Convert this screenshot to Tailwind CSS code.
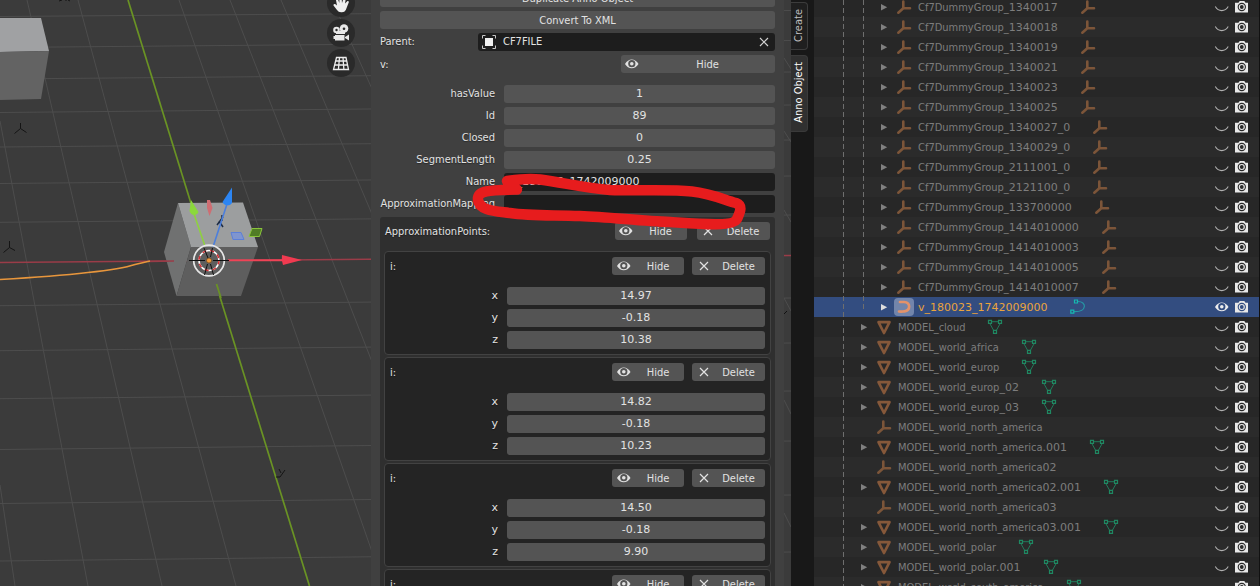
<!DOCTYPE html>
<html lang="en">
<head>
<meta charset="utf-8">
<meta name="viewport" content="width=device-width, initial-scale=1">
<title>Anno Object</title>
<script src="https://cdn.jsdelivr.net/npm/@tailwindcss/browser@4"></script>
</head>
<body class="flex h-screen overflow-hidden bg-[#181818] font-['DejaVu_Sans_Condensed','DejaVu_Sans',sans-serif] text-[11px] leading-[18px] text-[#e2e2e2]">

<svg class="hidden" aria-hidden="true">
  <symbol id="eye" viewBox="0 0 16 16"><path d="M1 8C4.200 2 11.200 2 14.500 8C11.200 13.600 4.200 13.600 1 8Z" fill="currentColor"/><circle cx="7.800" cy="7.700" r="3.600" fill="var(--hole)"/><circle cx="7.800" cy="7.700" r="1.800" fill="currentColor"/></symbol>
  <symbol id="cross" viewBox="0 0 16 16"><path d="M4 4l8 8M12 4l-8 8" stroke="currentColor" stroke-width="1.200" fill="none"/></symbol>
  <symbol id="closed" viewBox="0 0 16 16"><path d="M1.300 7.500C4.500 13 11 13 14.200 7.500" stroke="#b0b0b0" stroke-width="1.100" fill="none"/></symbol>
  <symbol id="camera" viewBox="0 0 16 16"><path d="M1 3.800h3.500l1.200-1.800h4.600l1.200 1.800h2.500v9.700h-13z" fill="#e8e8e8"/><circle cx="7.800" cy="8" r="3.600" fill="none" stroke="var(--hole)" stroke-width="1.100"/><circle cx="7.800" cy="8" r="1.900" fill="var(--hole)"/></symbol>
  <symbol id="arrow" viewBox="0 0 16 16"><path d="M5 5l6.200 3.300l-6.200 3.300z" fill="currentColor"/></symbol>
  <symbol id="empty" viewBox="0 0 16 16"><path d="M7.300 2.500V9.300M7.300 9.300H14M7.300 9.300L2.300 13.700" stroke="#7c5539" stroke-width="2.600" stroke-linecap="round" fill="none"/></symbol>
  <symbol id="mesh" viewBox="0 0 16 16"><path d="M2.500 3.200H13.500L8 14Z" stroke="#85583a" stroke-width="2.700" stroke-linejoin="round" fill="none"/></symbol>
  <symbol id="curve" viewBox="0 0 16 16"><path d="M4 3H8C15 3.400 14.500 11.500 8.500 12.300Q6 12.800 3 12.500" stroke="#e3926a" stroke-width="2.700" stroke-linecap="round" fill="none"/></symbol>
  <symbol id="meshdata" viewBox="0 0 16 16"><path d="M4 2.700H12M2.800 4.500L6.700 11.500M13.200 4.500L9.300 11.500" stroke="#22795a" stroke-width="1" fill="none"/><path d="M1.500 1.300h3v3h-3zM11.500 1.300h3v3h-3zM6.500 11.300h3v3h-3z" stroke="#1f8862" stroke-width="1.200" fill="none"/></symbol>
  <symbol id="curvedata" viewBox="0 0 16 16"><path d="M7.500 2.500C17 2 17.500 13 4 12.700" stroke="#2697a4" stroke-width="1.200" fill="none"/><path d="M4.500 1h3v3h-3zM.800 11.200h3v3h-3z" stroke="#16b8b0" stroke-width="1.200" fill="none"/></symbol>
</svg>

<!-- 3D viewport with its side panel -->
<main class="relative flex min-w-0 flex-1 items-start justify-end overflow-hidden bg-[#3b3b3b]">
  <svg class="absolute inset-0 h-full w-full" aria-label="3D scene">
    <g stroke="#4d4d4d" stroke-width="1" fill="none">
      <path d="M0 16.500L791 10.500M0 47.500L791 40.500M0 79L791 72M0 112.500L791 105M0 147L791 140M0 183.500L791 176M0 222.300L791 215M0 305.700L791 298M0 350.700L791 343M0 398.700L791 391M0 449.500L791 441M0 503.500L791 495M0 561L791 552"/>
      <path d="M0 485L15 586M0 121L88 586M27 0L162 586M78 0L236 586M179 0L384 586M230 0L460 586M281 0L530 586M332 0L596 586M784 58l7 11M784 131l7 11M784 210l7 12M784 298l7 13M784 400l7 14M784 513l7 14"/>
    </g>
    <path d="M0 262.500L791 255.500" stroke="#9a3c48" stroke-width="1.300"/>
    <path d="M128 0L309.500 586" stroke="#6a9324" stroke-width="1.700"/>
    <path d="M0 18H41L49 51L0 52Z" fill="#a0a1a3"/><path d="M0 52L49 51L41 99L0 100Z" fill="#636363"/>
    <path d="M178 203L191 247L176.500 296L164 252Z" fill="#707171"/>
    <path d="M178 203L243 202.500L258 247H191Z" fill="#9c9e9f"/>
    <path d="M191 247H258L241 296H176.500Z" fill="#5e5e5e"/>
    <path d="M216.500 284L221 298" stroke="#6a9324" stroke-width="1.700"/>
    <path d="M149 261.500L174 261" stroke="#9a3c48" stroke-width="1.300"/>
    <path d="M0 279.500C60 276 115 271 135 264.500L150 261" stroke="#e8963c" stroke-width="1.600" fill="none"/>
    <g stroke="#141414" stroke-width="1" fill="none">
      <path d="M20.500 123v5.500l-6 5M20.500 128.500l6 4M9.500 241v6.500l-6 5M9.500 247.500l5.500 3M59 1l3-1M66 1v-1M68 0l2 1M276 477h4l5-7M279 469l2 4"/>
    </g>
    <path d="M217 225l6-8M219 221l4 6M222 215v6" stroke="#1c2b45" stroke-width="1.500"/>
    <path d="M207 200l3-0l2.500 8l-3 8l-2.500-8z" fill="#cf6d72"/>
    <path d="M205 246L194 214" stroke="#8ed13f" stroke-width="1.600"/><path d="M191 200L198.500 212C197 216 191 216 189.500 211Z" fill="#8bd83c"/>
    <path d="M213 247L227 204" stroke="#4c7fdc" stroke-width="1.600"/><path d="M232 187.500V203C230 206.500 224 206 222.500 202Z" fill="#2c85f2"/>
    <path d="M231 232.500h10l3 7h-11z" fill="#7f95cf" stroke="#5c7fd8"/>
    <path d="M252 228.500h10l-2.500 8h-10.500z" fill="#507c25" stroke="#8ac43c"/>
    <path d="M228 260.300H283" stroke="#ef4356" stroke-width="2"/><path d="M282 255L302 260L283 265Q281 260 282 255Z" fill="#f03a50"/>
    <circle cx="209" cy="260.500" r="15.300" fill="none" stroke="#e6e6e6" stroke-width="1.700"/>
    <circle cx="209" cy="260.500" r="10" fill="none" stroke="#fff" stroke-width="1.500"/>
    <circle cx="209" cy="260.500" r="10" fill="none" stroke="#d32d32" stroke-width="1.500" stroke-dasharray="4 4"/>
    <path d="M189 260.500h16M213 260.500h16M208 258l-4-10M210.500 257l2-9M207.500 264l-3 11M210.500 264l3 11" stroke="#111" stroke-width="1"/>
    <circle cx="209" cy="260.500" r="2.500" fill="#f39a3d" stroke="#704818" stroke-width=".700"/>
    <path d="M784 314l3-3" stroke="#111"/>
  </svg>

  <nav class="relative -mt-[11px] mr-4 flex flex-col gap-[2px]" aria-label="View controls">
    <button aria-label="Move view" class="size-7 rounded-full bg-[#2a2a2a]"><svg class="size-7" viewBox="0 0 28 28"><path d="M10 21L6.500 16.500Q6.300 14.500 8.500 15.300L10 16.500L8.700 9.500Q9.200 8 10.600 9.200L12.300 14L12.500 7Q13.500 5.800 14.500 7L15 14L17 8Q18.500 7 19 8.500L18 14.500L20.500 12Q22 11.800 21.800 13.200L18.800 21Q17.500 23.500 14.300 23.200Q11.500 23.300 10 21Z" fill="#f0f0f0"/></svg></button>
    <button aria-label="Camera view" class="size-7 rounded-full bg-[#2a2a2a]"><svg class="size-7" viewBox="0 0 28 28"><circle cx="9.500" cy="11" r="3.300" fill="#e8e8e8"/><circle cx="17" cy="9.500" r="4.300" fill="#e8e8e8"/><path d="M9 12h9v3h-9zM8 16h9.500v5.500h-9.500v-1.500h-1.500v-3h1.500zM18 18l4-2.500v6l-4-2.500z" fill="#e8e8e8"/><circle cx="9.500" cy="11" r="1.200" fill="#2a2a2a"/><circle cx="17" cy="9.800" r="1.300" fill="#2a2a2a"/></svg></button>
    <button aria-label="Perspective" class="size-7 rounded-full bg-[#2a2a2a]"><svg class="size-7" viewBox="0 0 28 28" fill="none" stroke="#ededed" stroke-width="1.300"><path d="M9.500 8.500H19L21.500 20.500H6.500ZM8.700 12H19.700M7.700 16H20.700M12.500 8.500L11.400 20.500M16 8.500L16.900 20.500"/></svg></button>
  </nav>

  <section class="relative mr-[7px] h-screen w-[413px] shrink-0 overflow-hidden bg-[#404040] px-[9px]" aria-label="Anno Object panel">
    <div class="-mt-[11px] flex flex-col gap-1 [text-shadow:0_1px_1px_rgba(0,0,0,0.4)]">
      <button class="h-[18px] rounded-[3px] bg-[#545454] leading-[20px]">Duplicate Anno Object</button>
      <button class="h-[18px] rounded-[3px] bg-[#545454] pt-[2px] leading-[16px]">Convert To XML</button>
      <div class="flex h-[18px] items-center justify-between">
        <label for="parent">Parent:</label>
        <div class="flex h-[18px] w-[297px] items-center rounded-[3px] bg-[#1d1d1d] px-[3px]">
          <svg class="size-4" viewBox="0 0 16 16"><path d="M1.500 4.500v-3h3M11.500 1.500h3v3M14.500 11.500v3h-3M4.500 14.500h-3v-3" stroke="#c8c8c8" fill="none"/><path d="M4 4h8v8h-8z" fill="#f0f0f0"/></svg>
          <input id="parent" value="CF7FILE" class="ml-[6px] h-[18px] min-w-0 flex-1 bg-transparent">
          <button aria-label="Clear parent"><svg class="size-4 text-[#d0d0d0]"><use href="#cross"/></svg></button>
        </div>
      </div>
      <div class="mb-2 flex h-[18px] items-center justify-between">
        <span class="pt-[2px]">v:</span>
        <button class="flex h-[18px] w-[154px] items-center rounded-[3px] bg-[#545454] pl-[3px] [--hole:#545454]"><svg class="size-4"><use href="#eye"/></svg><span class="flex-1 pt-[2px]">Hide</span></button>
      </div>
      <div id="fields" class="flex flex-col gap-1"></div>
      <section class="rounded-[3px] bg-[#2f2f2f] px-1 pt-[5px]">
        <header class="mb-[11px] flex h-[18px] items-center gap-[10px] px-px">
          <h2 class="flex-1 pt-[2px]">ApproximationPoints:</h2>
          <button class="flex h-[18px] w-[72px] items-center rounded-[3px] bg-[#545454] pl-[3px] [--hole:#545454]"><svg class="size-4"><use href="#eye"/></svg><span class="flex-1 pt-[2px]">Hide</span></button>
          <button class="flex h-[18px] w-[73px] items-center rounded-[3px] bg-[#545454] pl-[3px]"><svg class="size-4"><use href="#cross"/></svg><span class="flex-1 pt-[2px]">Delete</span></button>
        </header>
        <div id="points" class="flex flex-col gap-[2px]"></div>
      </section>
    </div>
  </section>

  <!-- Freehand marker stroke around the ApproximationMapping field -->
  <svg class="pointer-events-none absolute inset-0 h-full w-full" aria-hidden="true"><path d="M507 181C520 179 530 178 540 179.500C565 183 585 188 610 190C640 191 670 189 692 191.500C712 194 722 199 736 203C744 206 739 214 737 219C733 227 700 224 670 222C640 221 610 217 580 216C550 215 530 216 510 213C495 211 480 211 478 200C477 190 490 190 517 189.500" fill="none" stroke="#e71c1d" stroke-width="10.500" stroke-linecap="round" stroke-linejoin="round"/></svg>
</main>

<!-- Side tabs -->
<div role="tablist" class="-ml-[7px] flex w-[30px] shrink-0 flex-col items-start gap-[5px] pt-[2px] pl-[7px]">
  <button role="tab" class="h-12 w-[17px] rounded-r-[4px] border border-l-0 border-[#3c3c3c] bg-[#1f1f1f] pt-1 text-[#bdbdbd]"><span class="inline-block rotate-180 leading-[16px] [writing-mode:vertical-rl]">Create</span></button>
  <button role="tab" aria-selected="true" class="h-[77px] w-[17px] rounded-r-[4px] border border-l-0 border-[#3a3a3a] bg-[#303030] pt-1 text-white"><span class="inline-block rotate-180 leading-[16px] [writing-mode:vertical-rl]">Anno Object</span></button>
</div>

<!-- Outliner -->
<aside class="relative h-screen w-[446px] shrink-0 overflow-hidden border-r border-[#111] bg-[#282828] text-[#7d7d7d]" aria-label="Outliner">
  <ul id="tree" class="-mt-[3px]"></ul>
  <div class="absolute inset-y-0 left-[29px] w-px bg-[repeating-linear-gradient(#6e6e6e_0_5px,transparent_5px_8px)]"></div>
  <div class="absolute top-0 left-[49px] h-[312px] w-px bg-[repeating-linear-gradient(#6e6e6e_0_5px,transparent_5px_8px)]"></div>
</aside>

<script>
const fields = [['hasValue', '1'], ['Id', '89'], ['Closed', '0'], ['SegmentLength', '0.25'], ['Name', 'v_180023_1742009000'], ['ApproximationMapping', '']];
document.getElementById('fields').innerHTML = fields.map(([name, value], i) => `
  <div class="grid h-[18px] grid-cols-[115px_1fr] items-center gap-[9px]">
    <label for="${name}" class="flex justify-end whitespace-nowrap">${name}</label>
    <input id="${name}" value="${value}" class="${i < 4
      ? "h-[18px] min-w-0 rounded-[3px] bg-[#545454] text-center font-['DejaVu_Sans',sans-serif]"
      : "h-[18px] min-w-0 rounded-[3px] bg-[#1d1d1d] px-[6px] font-['DejaVu_Sans',sans-serif]"}">
  </div>`).join('');

const points = [['14.97', '-0.18', '10.38'], ['14.82', '-0.18', '10.23'], ['14.50', '-0.18', '9.90'], ['14.21', '-0.18', '9.61']];
document.getElementById('points').innerHTML = points.map((p, n) => `
  <article class="rounded-[4px] border border-[#424242] bg-[#242424] p-[5px]">
    <header class="mb-3 flex h-[18px] items-center gap-2">
      <h3 class="flex-1 pt-[2px]">i:</h3>
      <button class="flex h-[18px] w-[72px] items-center rounded-[3px] bg-[#545454] pl-1 [--hole:#545454]"><svg class="size-4"><use href="#eye"/></svg><span class="flex-1 pt-[2px]">Hide</span></button>
      <button class="flex h-[18px] w-[73px] items-center rounded-[3px] bg-[#545454] pl-1"><svg class="size-4"><use href="#cross"/></svg><span class="flex-1 pt-[2px]">Delete</span></button>
    </header>
    <div class="flex flex-col gap-1 font-['DejaVu_Sans',sans-serif]">${p.map((v, k) => `
      <div class="grid h-[18px] grid-cols-[108px_1fr] items-center gap-[9px]">
        <label for="p${n}${k}" class="text-right">${'xyz'[k]}</label>
        <input id="p${n}${k}" value="${v}" class="h-[18px] min-w-0 rounded-[3px] bg-[#545454] text-center">
      </div>`).join('')}
    </div>
  </article>`).join('');

// Each row: depth, name, trailing id, object icon, data icon
const rows = [
  ...['1340017', '1340018', '1340019', '1340021', '1340023', '1340025', '1340027_0', '1340029_0', '2111001_0', '2121100_0', '133700000', '1414010000', '1414010003', '1414010005', '1414010007'].map(id => [3, 'Cf7DummyGroup_', id, 'empty', 'empty']),
  [3, '', 'v_180023_1742009000', 'curve', 'curvedata'],
  [2, 'MODEL_cloud', '', 'mesh', 'meshdata'],
  [2, 'MODEL_world_africa', '', 'mesh', 'meshdata'],
  [2, 'MODEL_world_europ', '', 'mesh', 'meshdata'],
  [2, 'MODEL_world_europ', '_02', 'mesh', 'meshdata'],
  [2, 'MODEL_world_europ', '_03', 'mesh', 'meshdata'],
  [2, 'MODEL_world_north_america', '', 'empty', ''],
  [2, 'MODEL_world_north_america', '.001', 'mesh', 'meshdata'],
  [2, 'MODEL_world_north_america', '02', 'empty', ''],
  [2, 'MODEL_world_north_america', '02.001', 'mesh', 'meshdata'],
  [2, 'MODEL_world_north_america', '03', 'empty', ''],
  [2, 'MODEL_world_north_america', '03.001', 'mesh', 'meshdata'],
  [2, 'MODEL_world_polar', '', 'mesh', 'meshdata'],
  [2, 'MODEL_world_polar', '.001', 'mesh', 'meshdata'],
  [2, 'MODEL_world_south_america', '', 'mesh', 'meshdata'],
];
document.getElementById('tree').innerHTML = rows.map(([depth, name, id, icon, data], i) => {
  const selected = icon === 'curve';
  const tone = selected ? 'bg-[#334d80] [--hole:#334d80]' : i % 2 ? 'bg-[#2b2b2b] [--hole:#2b2b2b]' : 'bg-[#272727] [--hole:#272727]';
  return `<li class="flex h-5 items-center pr-[9px] ${depth === 3 ? 'pl-[60px]' : 'pl-10'} ${tone}">
    <span class="flex w-5 justify-center">${data ? `<svg class="size-4 ${selected ? 'text-[#dddddd]' : 'text-[#808080]'}"><use href="#arrow"/></svg>` : ''}</span>
    <span class="flex h-[18px] w-5 items-center justify-center rounded-[4px] ${selected ? 'bg-[#7285ab]' : ''}"><svg class="size-4"><use href="#${icon}"/></svg></span>
    <span class="ml-1 pt-[2px] whitespace-nowrap ${selected ? 'text-[#eaa43c]' : ''}">${name}<span class="font-['DejaVu_Sans',sans-serif]">${id}</span></span>
    ${data ? `<svg class="ml-[22px] size-4"><use href="#${data}"/></svg>` : ''}
    <button aria-label="Toggle visibility" class="ml-auto text-[#ededed]"><svg class="size-4"><use href="#${selected ? 'eye' : 'closed'}"/></svg></button>
    <button aria-label="Toggle render" class="ml-1"><svg class="size-4"><use href="#camera"/></svg></button>
  </li>`;
}).join('');
</script>
</body>
</html>
